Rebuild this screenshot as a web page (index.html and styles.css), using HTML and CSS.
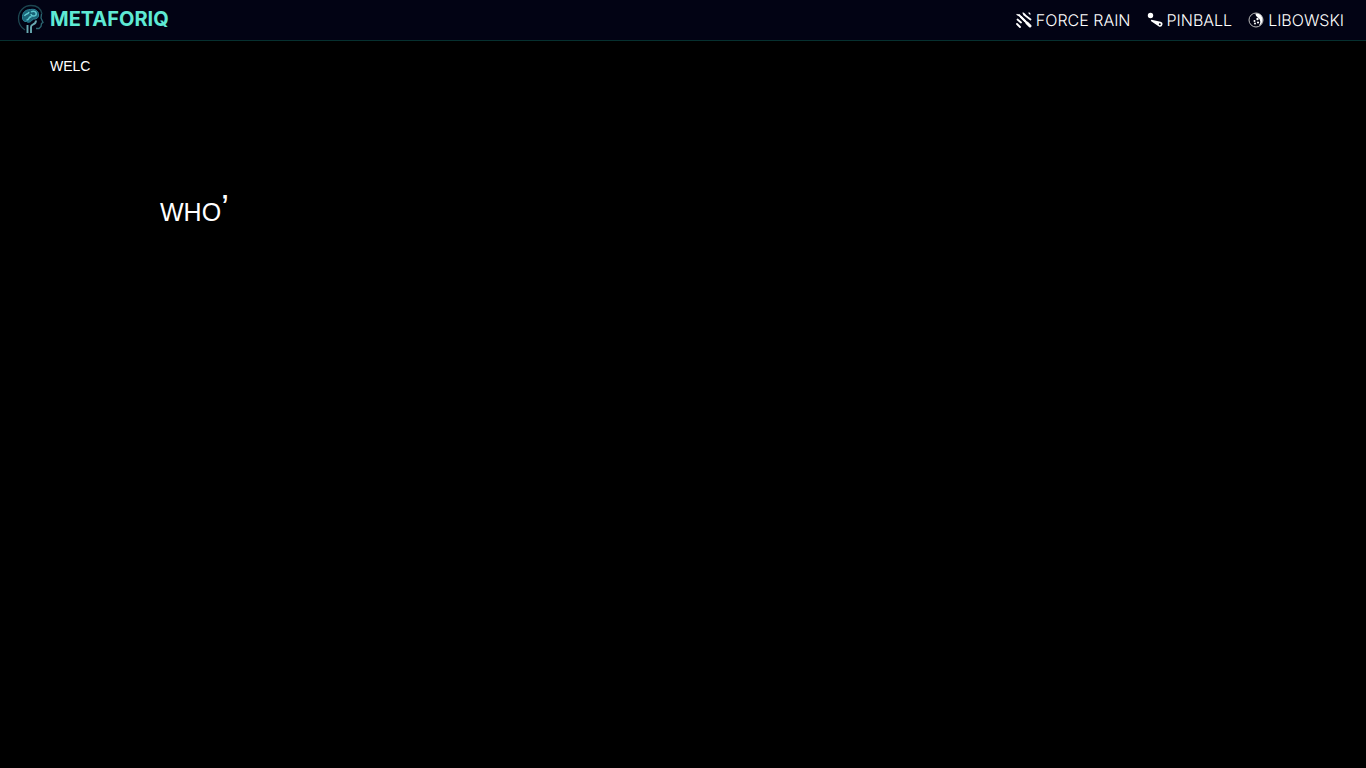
FILE: index.html
```
<!DOCTYPE html>
<html lang="en">
    <head>
        <meta charset="utf-8">
        <title>METAFORIQ</title>
        <link rel="stylesheet" href="styles.css">
    </head>
    <body>
        <header class="header">
            <a class="brand" href="#">
                <svg class="logo" viewBox="0 0 28 30" fill="none">
                    <path d="M9 26C5 23.500 2.500 19 2.500 14.500C2.500 7 8 1.500 15 1.500C21 1.500 25 5 26 10" stroke="#1d4650" stroke-width="1.300"/>
                    <path d="M25.500 10L25 14L27 18.500L25.500 19.500L25 22.500L23 24.500H20" stroke="#2b6672" stroke-width="1.300"/>
                    <path d="M6.500 14C6 9 9 5.500 14.500 5.500C19 4.500 23 7 22.500 11C23 14 19.500 15.500 17 15C15 18.500 12 19 10.500 17.500C8 18 6.500 16 6.500 14Z" fill="#1a6478" stroke="#2c8295"/>
                    <path d="M8.500 12C10 9 12 11 13 8M10.500 16C14 16 12 12 15.500 13M15 8C18 6 21 8 20 11C18 13 15 12 15 10" stroke="#5cc6ce" stroke-width="1.500"/>
                    <path d="M11.500 29V21M15 29V23C15 19.500 20 21.500 20 16.500" stroke="#68a9b2" stroke-width="1.900"/>
                </svg>
                <span>METAFORIQ</span>
            </a>
            <nav class="nav">
                <a class="link" href="#">
                    <svg class="icon" viewBox="0 0 16 16" fill="none" stroke="#fff" stroke-linecap="round">
                        <path d="M1 2.500L2.500 3.500M7 1L9 2.500M13 1L14 2" stroke-width="1.200"/>
                        <path d="M3 3L9 9M8 2.500L14.500 7.500M1.500 7.500L5 10.500M1 12L4 15" stroke-width="1.800"/>
                        <path d="M5 5L14 14" stroke-width="2"/>
                        <path d="M11 11L14 14" stroke-width="3"/>
                    </svg>
                    <span>FORCE RAIN</span>
                </a>
                <a class="link" href="#">
                    <svg class="icon" viewBox="0 0 16 16">
                        <circle cx="3.500" cy="3.500" r="2.700" fill="#fff"/>
                        <path d="M4.500 7.800L13.500 9.700A2.500 2.500 0 0 1 12.300 14.700L4.200 9.300Q3.300 7.900 4.500 7.800Z" fill="#fff"/>
                        <circle cx="12.800" cy="12.200" r="1" fill="#020314"/>
                    </svg>
                    <span>PINBALL</span>
                </a>
                <a class="link" href="#">
                    <svg class="icon" viewBox="0 0 16 16">
                        <circle cx="8" cy="8" r="7" fill="none" stroke="#bbb"/>
                        <path d="M7.500 1.500C12 1 15 4.500 14.500 8.500C14 11.500 12.500 13 11 13.500C13 10.500 12.500 8.500 11 6.500C9.500 5 7.500 4.500 7.500 1.500Z" fill="#fff"/>
                        <circle cx="9.500" cy="7" r="1.200" fill="#fff"/>
                        <circle cx="6.500" cy="9" r="1" fill="#fff"/>
                        <circle cx="10" cy="10.500" r="1.100" fill="#fff"/>
                        <circle cx="7" cy="11.500" r="1" fill="#fff"/>
                    </svg>
                    <span>LIBOWSKI</span>
                </a>
            </nav>
        </header>
        <main class="main">
            <p class="welcome">WELC</p>
            <h1 class="question">WHO<span class="letter">’</span></h1>
        </main>
    </body>
</html>
```
FILE: styles.css
```
body{
    margin: 0;
    background-color: #000;
    color: #fff;
    font-family: "Liberation Sans", Arial, sans-serif;
}
.header{
    display: flex;
    justify-content: space-between;
    align-items: center;
    height: 40px;
    padding: 0 22px 0 16px;
    background-color: #020314;
    border-bottom: 1px solid #06302f;
    font-family: Inter, sans-serif;
}
.brand{
    display: flex;
    align-items: center;
    gap: 6px;
    color: #5eead4;
    font-size: 20px;
    font-weight: 700;
    line-height: 28px;
    text-decoration: none;
    padding-bottom: 2px;
}
.logo{
    width: 28px;
    height: 30px;
}
.nav{
    display: flex;
    gap: 16px;
    text-rendering: geometricPrecision;
}
.link{
    display: flex;
    align-items: center;
    gap: 4px;
    color: #fff;
    font-size: 16px;
    font-weight: 300;
    line-height: 24px;
    text-decoration: none;
}
.icon{
    width: 16px;
    height: 16px;
}
.main{
    padding: 17px 50px;
}
p{
    margin: 0;
}
.welcome{
    font-size: 14px;
    line-height: 16px;
}
.question{
    margin: 115px 0 0 110px;
    font-size: 25px;
    font-weight: 400;
    line-height: 40px;
}
.letter{
    font-size: 36px;
}
```
